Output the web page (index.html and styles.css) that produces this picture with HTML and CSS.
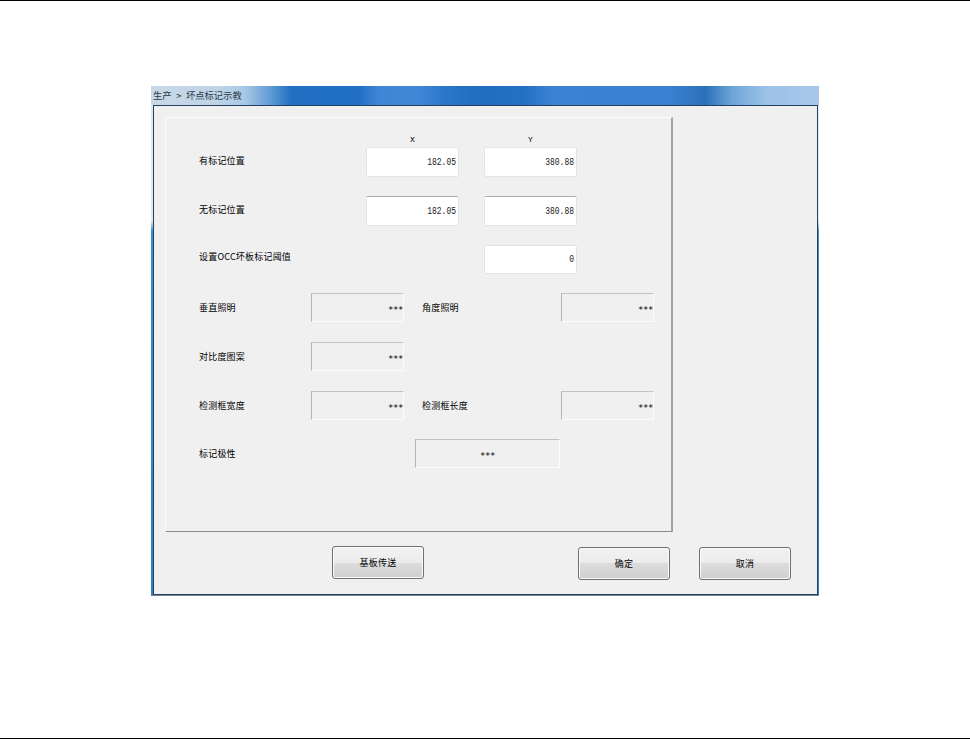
FILE: index.html
```html
<!DOCTYPE html>
<html lang="zh-CN">
<head>
<meta charset="utf-8">
<title>坏点标记示教</title>
<link rel="stylesheet" href="styles.css">
</head>
<body>
<main class="page">
  <section class="window">
    <header class="titlebar">生产 &gt; 坏点标记示教</header>
    <div class="client">
      <div class="panel">
        <div class="row row-head"><span class="axis">X</span><span></span><span class="axis">Y</span></div>
        <div class="row row-input">
          <span class="label">有标记位置</span><span class="field"><span class="num">182.05</span></span><span></span><span class="field"><span class="num">380.88</span></span>
        </div>
        <div class="row row-input">
          <span class="label">无标记位置</span><span class="field field-top"><span class="num">182.05</span></span><span></span><span class="field field-top"><span class="num">380.88</span></span>
        </div>
        <div class="row row-input">
          <span class="label label-up">设置OCC坏板标记阈值</span><span></span><span></span><span class="field"><span class="num">0</span></span>
        </div>
        <div class="row row-ro">
          <span class="label">垂直照明</span><span class="ro">***</span><span></span><span class="label">角度照明</span><span class="ro">***</span>
        </div>
        <div class="row row-ro">
          <span class="label">对比度图案</span><span class="ro">***</span>
        </div>
        <div class="row row-ro">
          <span class="label">检测框宽度</span><span class="ro">***</span><span></span><span class="label">检测框长度</span><span class="ro">***</span>
        </div>
        <div class="row row-polar">
          <span class="label">标记极性</span><span class="ro ro-center">***</span>
        </div>
      </div>
      <div class="actions">
        <button class="btn btn-transfer">基板传送</button>
        <button class="btn btn-ok">确定</button>
        <button class="btn btn-cancel">取消</button>
      </div>
    </div>
  </section>
</main>
</body>
</html>
```

FILE: styles.css
```css
html, body { margin: 0; padding: 0; background: #fff; }
.page {
  box-sizing: border-box;
  width: 970px;
  height: 739px;
  border-top: 1px solid #000;
  border-bottom: 1px solid #000;
  padding: 85px 0 0 151px;
  font-family: "Noto Sans CJK SC", "Liberation Sans", sans-serif;
  color: #000;
}
.window {
  box-sizing: border-box;
  width: 668px;
  height: 510px;
  display: flex;
  flex-direction: column;
  padding: 0 1px 0 2px;
  border-bottom: 1px solid #6f8494;
  background: linear-gradient(to bottom, #dfeaf4 0, #dfeaf4 135px, #3f8fd4 145px, #2d7fc8 100%);
}
.titlebar {
  height: 19px;
  margin: 0 -1px 0 -2px;
  padding-left: 2px;
  font-size: 9.3px;
  line-height: 19px;
  word-spacing: 2.5px;
  color: #2b3a48;
  background: linear-gradient(to right, #c9d8e6 0, #bfd4e8 10%, #a9c8e6 14%, #5d9ad4 18%, #2170c4 21%, #1f6fc4 31%, #3f86d4 34%, #4088d6 40%, #2a76c8 44%, #1f6cc0 50%, #2470c4 56%, #3b82d2 60%, #3a80d0 78%, #2a70b8 83%, #6ea4d8 87%, #9cc2e8 92%, #a8c8ea 100%);
}
.client {
  flex: 1;
  display: flex;
  flex-direction: column;
  padding: 11px 0 0 11px;
  border: 1px solid #23415e;
  background: #f0f0f0;
}
.panel {
  box-sizing: border-box;
  width: 508px;
  height: 415px;
  padding: 15px 0 0 33px;
  background: #f0f0f0;
  border-top: 1px solid #fbfbfb;
  border-left: 1px solid #fbfbfb;
  border-right: 2px solid #a3a3a3;
  border-bottom: 1px solid #8d8d8d;
  display: flex;
  flex-direction: column;
}
.row { display: grid; align-items: center; font-size: 9px; letter-spacing: .2px; }
.row-head {
  height: 14px;
  grid-template-columns: 93px 25px 93px;
  margin-left: 167px;
  justify-items: center;
}
.axis { font: 8px/14px "Liberation Mono", monospace; }
.row-input {
  grid-template-columns: 167px 93px 25px 93px;
  height: 30px;
  margin-bottom: 19px;
}
.row-input .label { margin-bottom: 3px; }
.row-input:nth-child(4) { height: 29px; }
.row-ro {
  grid-template-columns: 112px 93px 18px 139px 93px;
  height: 29px;
  margin-bottom: 20px;
}
.row-polar {
  grid-template-columns: 216px 145px;
  height: 29px;
  margin-top: -1px;
}
.label { line-height: 12px; }
.row-input .label-up { margin: 0 0 6px; white-space: nowrap; }
.field, .ro {
  box-sizing: border-box;
  height: 100%;
  display: flex;
  align-items: center;
  justify-content: flex-end;
  padding-right: 2px;
  letter-spacing: 0;
  color: #222;
}
.field {
  background: #fff;
  border: 1px solid #e2e4e8;
  border-radius: 2px;
  padding-bottom: 2px;
  font: 8px "Liberation Mono", monospace;
}
.num { display: inline-block; transform: scaleY(1.4); }
.field-top { border-top-color: #a9abb0; }
.ro {
  background: #f0f0f0;
  border-top: 1px solid #c2c2c2;
  border-left: 1px solid #b4b4b4;
  border-right: 1px solid #fbfbfb;
  border-bottom: 1px solid #fbfbfb;
  padding: 4px 0 0;
  font: 9px "DejaVu Sans Mono", monospace;
  letter-spacing: -.4px;
  color: #000;
}
.ro-center { justify-content: center; }
.actions { display: flex; padding-top: 14px; align-items: flex-start; }
.btn {
  box-sizing: border-box;
  width: 92px;
  height: 33px;
  padding: 0;
  font-family: "Noto Sans CJK SC", "Liberation Sans", sans-serif;
  font-size: 9px;
  letter-spacing: .2px;
  color: #000;
  border: 1px solid #707070;
  border-radius: 3px;
  background: linear-gradient(to bottom, #f2f2f2 0, #ebebeb 50%, #dddddd 50%, #cfcfcf 100%);
  box-shadow: inset 0 0 0 1px #fbfbfb;
}
.btn-transfer { margin-left: 167px; }
.btn-ok { margin: 1px 0 0 154px; }
.btn-cancel { margin: 1px 0 0 29px; }
```
